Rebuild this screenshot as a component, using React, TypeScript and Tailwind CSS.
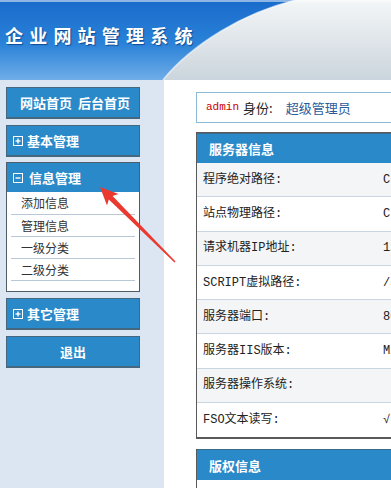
import React from 'react';

const cn = '"Noto Sans CJK SC", "Liberation Sans", sans-serif';
const mono = '"Liberation Mono", "Noto Sans CJK SC", monospace';

const serverRows = [
  { label: '程序绝对路径:', value: 'C:\\wwwroot\\admin\\index.asp' },
  { label: '站点物理路径:', value: 'C:\\wwwroot\\' },
  { label: '请求机器IP地址:', value: '127.0.0.1' },
  { label: 'SCRIPT虚拟路径:', value: '/admin/index.asp' },
  { label: '服务器端口:', value: '80' },
  { label: '服务器IIS版本:', value: 'Microsoft-IIS/7.5' },
  { label: '服务器操作系统:', value: '' },
  { label: 'FSO文本读写:', value: '√' },
];

const subItems = ['添加信息', '管理信息', '一级分类', '二级分类'];

function BoxIcon({ open }: { open?: boolean }) {
  return (
    <svg width="10" height="10" viewBox="0 0 10 10" className="shrink-0">
      <rect x="0.5" y="0.5" width="9" height="9" fill="none" stroke="#fff" strokeWidth="1" />
      <line x1="2.5" y1="5" x2="7.5" y2="5" stroke="#fff" strokeWidth="1.4" />
      {!open && <line x1="5" y1="2.5" x2="5" y2="7.5" stroke="#fff" strokeWidth="1.4" />}
    </svg>
  );
}

function Header() {
  return (
    <div className="relative h-[80px] w-full">
      <svg className="absolute inset-0 w-full h-full" viewBox="0 0 391 80" preserveAspectRatio="none">
        <defs>
          <linearGradient id="grey" x1="0" y1="0" x2="0" y2="1">
            <stop offset="0" stopColor="#f4f6f7" />
            <stop offset="1" stopColor="#cbd5dd" />
          </linearGradient>
          <linearGradient id="blue" x1="0" y1="0" x2="0" y2="1">
            <stop offset="0" stopColor="#1a6bcb" />
            <stop offset="0.55" stopColor="#2a82d8" />
            <stop offset="1" stopColor="#70ade8" />
          </linearGradient>
        </defs>
        <rect x="0" y="0" width="391" height="80" fill="url(#grey)" />
        <path d="M0 0 L296 0 C245 12 192 44 163 80 L0 80 Z" fill="url(#blue)" />
        <path d="M296 0 C245 12 192 44 163 80" fill="none" stroke="#ffffff" strokeOpacity="0.6" strokeWidth="1.5" />
        <rect x="0" y="0" width="391" height="2" fill="#ffffff" fillOpacity="0.5" />
      </svg>
      <h1
        className="relative pl-[5px] pt-[24px] text-[18px] leading-[22px] font-bold text-white tracking-[6.2px] [text-shadow:1px_1px_1px_rgba(0,40,100,0.6)]"
        style={{ fontFamily: cn }}
      >
        企业网站管理系统
      </h1>
    </div>
  );
}

function Sidebar() {
  const btn =
    'w-[134px] h-[32px] bg-[#2a89c8] border border-[#46687e] border-b-2 text-white font-bold text-[13px] flex items-center';
  return (
    <div className="w-[164px] shrink-0 bg-[#dce6f2] pt-[7px] pl-[6px]">
      <div className={btn + ' justify-center pl-[4px]'}>网站首页&nbsp;&nbsp;后台首页</div>
      <div className={btn + ' mt-[6px] pl-[6px] gap-[4px]'}>
        <BoxIcon />
        基本管理
      </div>
      <div className="mt-[5px] w-[134px] border border-[#4f5d66] bg-white">
        <div className="h-[29px] bg-[#2a89c8] text-white font-bold text-[13px] flex items-center pl-[6px] gap-[4px]">
          <BoxIcon open />
          <span className="ml-[2px]">信息管理</span>
        </div>
        <div className="pb-[10px]">
          {subItems.map((s, i) => (
            <div
              key={s}
              className={
                'mx-[4px] border-b border-[#b8c8d6] text-[12px] text-[#333] pl-[10px] flex items-center ' +
                (i === 0 ? 'h-[23px]' : 'h-[22px]')
              }
            >
              {s}
            </div>
          ))}
        </div>
      </div>
      <div className={btn + ' mt-[6px] pl-[6px] gap-[4px]'}>
        <BoxIcon />
        其它管理
      </div>
      <div className={btn + ' mt-[6px] justify-center'}>退出</div>
    </div>
  );
}

function Main() {
  return (
    <div className="flex-1 bg-white pl-[32px] pt-[12px] overflow-hidden">
      <div className="w-[560px]">
        <div className="h-[31px] border border-[#8cbad6] flex items-center pl-[9px] text-[13px]">
          <span className="text-[#cc0000] text-[11px] mr-[4px]" style={{ fontFamily: mono }}>
            admin
          </span>
          <span className="text-[#222]">身份:</span>
          <span className="text-[#2b5c9a] ml-[13px]">超级管理员</span>
        </div>

        <div className="mt-[9px] border border-[#5a5a5a] border-b-2">
          <div className="h-[30px] bg-[#2a89c8] border-t border-[#3c6a88] flex items-center pl-[12px] text-white font-bold text-[13px]">
            服务器信息
          </div>
          {serverRows.map((r, i) => (
            <div
              key={r.label}
              className={
                'grid grid-cols-[186px_1fr] h-[34.3px] items-center border-b border-[#c9d5e0] text-[12px] text-[#222] ' +
                (i % 2 === 0 ? 'bg-[#f3f5f7]' : 'bg-white') +
                (i === serverRows.length - 1 ? ' border-b-0' : '')
              }
              style={{ fontFamily: mono }}
            >
              <div className="pl-[6px] whitespace-nowrap">{r.label}</div>
              <div className="whitespace-nowrap">{r.value}</div>
            </div>
          ))}
        </div>

        <div className="mt-[10px] border-l border-[#5a5a5a]">
          <div className="h-[31px] bg-[#2a89c8] border-t border-[#3c6a88] flex items-center pl-[12px] text-white font-bold text-[13px]">
            版权信息
          </div>
          <div className="h-[40px] bg-white" />
        </div>
      </div>
    </div>
  );
}

export default function App() {
  return (
    <div className="relative w-[391px] h-[488px] overflow-hidden bg-white" style={{ fontFamily: cn }}>
      <Header />
      <div className="flex h-[408px]">
        <Sidebar />
        <Main />
      </div>
      {/* red annotation arrow */}
      <svg className="absolute left-0 top-0 pointer-events-none" width="391" height="488">
        <polygon
          points="100,187 118.5,194 112.6,196 175.5,261.5 174.5,262.5 108.8,199.6 107,205.5"
          fill="#ea3a2f"
        />
      </svg>
    </div>
  );
}
